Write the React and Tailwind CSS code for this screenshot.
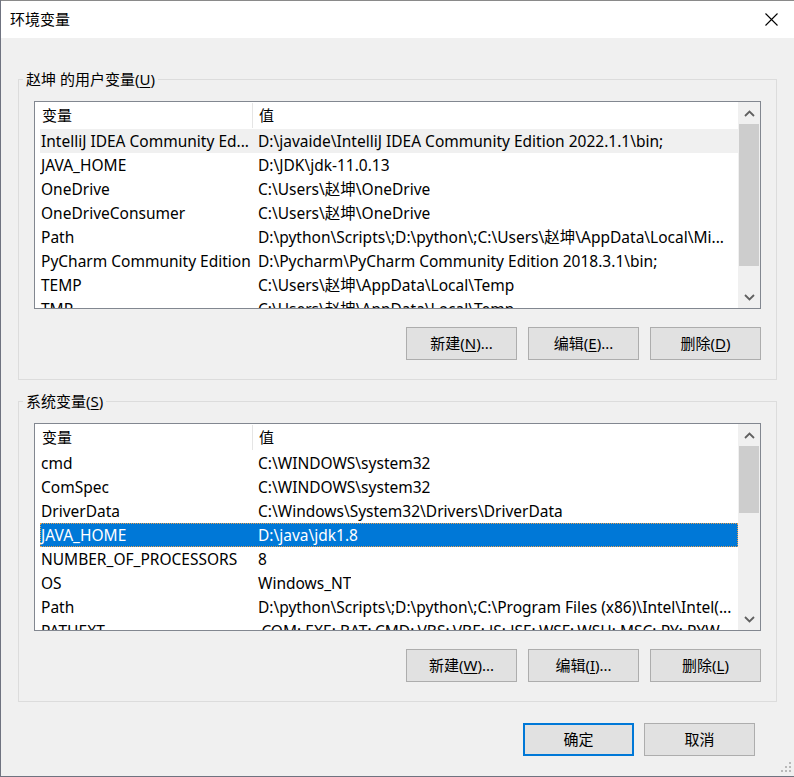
import React from 'react'

const USER_VARS = [
  ['IntelliJ IDEA Community Ed...', 'D:\\javaide\\IntelliJ IDEA Community Edition 2022.1.1\\bin;'],
  ['JAVA_HOME', 'D:\\JDK\\jdk-11.0.13'],
  ['OneDrive', 'C:\\Users\\赵坤\\OneDrive'],
  ['OneDriveConsumer', 'C:\\Users\\赵坤\\OneDrive'],
  ['Path', 'D:\\python\\Scripts\\;D:\\python\\;C:\\Users\\赵坤\\AppData\\Local\\Mi...'],
  ['PyCharm Community Edition', 'D:\\Pycharm\\PyCharm Community Edition 2018.3.1\\bin;'],
  ['TEMP', 'C:\\Users\\赵坤\\AppData\\Local\\Temp'],
  ['TMP', 'C:\\Users\\赵坤\\AppData\\Local\\Temp'],
]

const SYSTEM_VARS = [
  ['cmd', 'C:\\WINDOWS\\system32'],
  ['ComSpec', 'C:\\WINDOWS\\system32'],
  ['DriverData', 'C:\\Windows\\System32\\Drivers\\DriverData'],
  ['JAVA_HOME', 'D:\\java\\jdk1.8'],
  ['NUMBER_OF_PROCESSORS', '8'],
  ['OS', 'Windows_NT'],
  ['Path', 'D:\\python\\Scripts\\;D:\\python\\;C:\\Program Files (x86)\\Intel\\Intel(...'],
  ['PATHEXT', '.COM;.EXE;.BAT;.CMD;.VBS;.VBE;.JS;.JSE;.WSF;.WSH;.MSC;.PY;.PYW'],
]

function Chevron({ down }) {
  return (
    <svg width="11" height="7" viewBox="0 0 11 7" className={down ? 'rotate-180' : ''}>
      <path d="M1 6 L5.5 1.5 L10 6" fill="none" stroke="#606060" strokeWidth="1.8" />
    </svg>
  )
}

function Scrollbar({ thumb }) {
  return (
    <div className="w-[22px] bg-[#f0f0f0] flex flex-col px-[1px]">
      <div className="h-[22px] flex items-center justify-center">
        <Chevron />
      </div>
      <div className={`${thumb} bg-[#cdcdcd]`} />
      <div className="flex-1" />
      <div className="h-[21px] flex items-center justify-center">
        <Chevron down />
      </div>
    </div>
  )
}

function Row({ name, value, state }) {
  let cls = 'bg-white'
  if (state === 'hot') cls = 'bg-[#f0f0f0]'
  if (state === 'selected') cls = 'bg-[#0078d7] text-white outline-1 outline-dotted outline-[#e9a04f] -outline-offset-1'

  return (
    <div className={`h-[24px] shrink-0 pt-[2px] flex items-center whitespace-nowrap text-[15.5px] ${cls}`}>
      <div className="w-[213px] shrink-0 pl-[1px] overflow-hidden">{name}</div>
      <div className="pl-[5px] overflow-hidden">{value}</div>
    </div>
  )
}

function VarList({ rows, hot, selected, thumb }) {
  return (
    <div className="h-[208px] border border-[#828790] bg-white flex overflow-hidden">
      <div className="flex-1 pl-[5px] flex flex-col overflow-hidden">
        <div className="h-[27px] shrink-0 flex items-center">
          <div className="w-[213px] h-[25px] shrink-0 pl-[2px] border-r border-[#e5e5e5] flex items-center">变量</div>
          <div className="pl-[6px]">值</div>
        </div>
        {rows.map(([name, value], i) => (
          <Row
            key={name + i}
            name={name}
            value={value}
            state={i === hot ? 'hot' : i === selected ? 'selected' : ''}
          />
        ))}
      </div>
      <Scrollbar thumb={thumb} />
    </div>
  )
}

function Btn({ children, primary }) {
  return (
    <button
      className={`w-[111px] h-[33px] bg-[#e1e1e1] text-black flex items-center justify-center ${
        primary ? 'border-2 border-[#0078d7]' : 'border border-[#adadad]'
      }`}
    >
      {children}
    </button>
  )
}

function Key({ children }) {
  return <u className="underline underline-offset-[2px] decoration-1">{children}</u>
}

function Group({ label, children, className = '' }) {
  return (
    <fieldset className={`mx-[17px] border border-[#dcdcdc] px-[15px] pb-[19px] ${className}`}>
      <legend className="-ml-[11px] px-[3px] leading-[20px]">{label}</legend>
      {children}
    </fieldset>
  )
}

export default function App() {
  return (
    <div className="relative w-[794px] h-[777px] bg-[#f0f0f0] text-[15px] text-black font-[family-name:'Noto_Sans','Noto_Sans_CJK_SC',sans-serif] border-l border-[#6f7380] border-b overflow-hidden flex flex-col">
      <div className="h-[38px] shrink-0 bg-white border-t border-[#8a8a8a] flex items-center justify-between pl-[9px] pr-[16px]">
        <span>环境变量</span>
        <svg width="13" height="13" viewBox="0 0 13 13">
          <path d="M0.5 0.5 L12.5 12.5 M12.5 0.5 L0.5 12.5" stroke="#000" strokeWidth="1.1" />
        </svg>
      </div>

      <Group label={<>赵坤 的用户变量(<Key>U</Key>)</>} className="mt-[31px]">
        <div className="mt-[12px]">
          <VarList rows={USER_VARS} hot={0} thumb="h-[142px]" />
        </div>
        <div className="mt-[18px] flex justify-end gap-[11px]">
          <Btn>新建(<Key>N</Key>)...</Btn>
          <Btn>编辑(<Key>E</Key>)...</Btn>
          <Btn>删除(<Key>D</Key>)</Btn>
        </div>
      </Group>

      <Group label={<>系统变量(<Key>S</Key>)</>} className="mt-[11px]">
        <div className="mt-[12px]">
          <VarList rows={SYSTEM_VARS} selected={3} thumb="h-[67px]" />
        </div>
        <div className="mt-[18px] flex justify-end gap-[11px]">
          <Btn>新建(<Key>W</Key>)...</Btn>
          <Btn>编辑(<Key>I</Key>)...</Btn>
          <Btn>删除(<Key>L</Key>)</Btn>
        </div>
      </Group>

      <div className="mt-[21px] flex justify-end gap-[10px] pr-[39px]">
        <Btn primary>确定</Btn>
        <Btn>取消</Btn>
      </div>

      <svg width="12" height="12" viewBox="0 0 12 12" className="absolute right-[2px] bottom-[3px]">
        <g fill="#b9b9b9">
          <rect x="9" y="1" width="2" height="2" />
          <rect x="5" y="5" width="2" height="2" />
          <rect x="9" y="5" width="2" height="2" />
          <rect x="1" y="9" width="2" height="2" />
          <rect x="5" y="9" width="2" height="2" />
          <rect x="9" y="9" width="2" height="2" />
        </g>
      </svg>
    </div>
  )
}
